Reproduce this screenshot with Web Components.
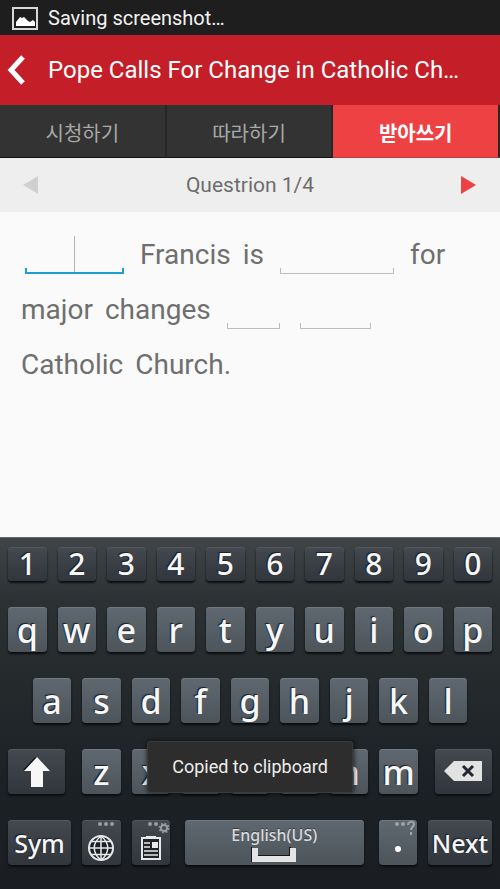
<!DOCTYPE html>
<html lang="en">
<head>
<meta charset="utf-8">
<meta name="viewport" content="width=device-width, initial-scale=1">
<title>Dictation</title>
<style>
  html, body { height: 100%; }
  body { margin: 0; font-family: Roboto, "Noto Sans CJK KR", sans-serif; background: #fafafa; }
</style>
</head>
<body>
<dictation-app></dictation-app>

<script>
const define = (name, html, setup) => {
  const template = document.createElement('template');
  template.innerHTML = html;
  customElements.define(name, class extends HTMLElement {
    constructor() {
      super();
      this.attachShadow({ mode: 'open' }).append(template.content.cloneNode(true));
    }
    connectedCallback() { if (setup) setup(this, this.shadowRoot); }
  });
};

define('status-bar', `
<style>
  :host { display: flex; align-items: center; gap: 10px; height: 35px; padding: 0 12px; background: #1e1e1e; color: #f2f2f2; font-size: 20px; }
  svg { display: block; flex: none; }
</style>
<svg width="26" height="24" viewBox="0 0 26 24" aria-hidden="true">
  <rect x="1" y="2" width="24" height="21" fill="none" stroke="#d8d8d8" stroke-width="2"/>
  <path d="M4 20v-4l4-5 2 1 2-1 4 4 2 1 3-2 2 2v4z" fill="#fff"/>
</svg>
<slot></slot>`);

define('title-bar', `
<style>
  :host { display: flex; align-items: center; gap: 16px; height: 70px; padding: 0 40px 0 6px; background: #c41e28; color: #fff; box-sizing: border-box; }
  button { flex: none; width: 26px; height: 40px; padding: 0; border: 0; background: none; }
  svg { display: block; }
  h1 { margin: 0; font-size: 24px; font-weight: 400; white-space: nowrap; line-height: 32px; }
</style>
<button aria-label="Back"><svg width="22" height="40" viewBox="0 0 22 40"><path d="M17 7L5 20l12 13" fill="none" stroke="#fff" stroke-width="5"/></svg></button>
<h1><slot></slot></h1>`);

define('tab-item', `
<style>
  :host { display: flex; flex: 1 1 0; }
  button { flex: 1; padding: 2px 0 0; border: 0; border-right: 2px solid #262626; border-bottom: 1px solid #111; background: #333; color: #a8a8a8; font: 400 20px "Noto Sans CJK KR", sans-serif; }
  :host([selected]) button { background: #ee4143; border-bottom-color: #c93a3c; color: #fff; font-weight: 700; }
</style>
<button role="tab"><slot></slot></button>`, (host, root) => {
  root.querySelector('button').setAttribute('aria-selected', host.hasAttribute('selected'));
});

define('tab-strip', `
<style>:host { display: flex; height: 53px; background: #222; }</style>
<slot></slot>`);

define('question-nav', `
<style>
  :host { display: flex; align-items: center; justify-content: space-between; height: 54px; padding: 0 20px; background: #eee; color: #6d6d6d; font-size: 21px; }
  button { display: block; padding: 0; width: 22px; height: 30px; border: 0; background: none; color: #ee4143; }
  button:disabled { color: #d0d0d0; }
  svg { display: block; margin: auto; }
</style>
<button aria-label="Previous question" disabled><svg width="16" height="18" viewBox="0 0 16 18"><path d="M15 0v18L0 9z" fill="currentColor"/></svg></button>
<span><slot></slot></span>
<button aria-label="Next question"><svg width="16" height="18" viewBox="0 0 16 18"><path d="M0 0v18l15-9z" fill="currentColor"/></svg></button>`);

define('blank-field', `
<style>
  :host { display: block; margin: 0 4px; --line: #bdbdbd; --thick: 1px; --caret: transparent; }
  :host([active]) { --line: #1b9fd4; --thick: 2px; --caret: #b4b4b4; }
  input { display: block; box-sizing: border-box; width: 100%; height: 38px; border: 0; padding: 0 4px; outline: 0; font: inherit; color: inherit; text-align: center;
    background:
      linear-gradient(var(--caret), var(--caret)) center top / 1px 36px no-repeat,
      linear-gradient(var(--line), var(--line)) left bottom / 100% var(--thick) no-repeat,
      linear-gradient(var(--line), var(--line)) left bottom / var(--thick) 6px no-repeat,
      linear-gradient(var(--line), var(--line)) right bottom / var(--thick) 6px no-repeat; }
</style>
<input type="text">`, (host, root) => {
  host.style.width = host.getAttribute('size') + 'px';
  root.querySelector('input').setAttribute('aria-label', host.getAttribute('label'));
});

define('cloze-text', `
<style>
  :host { display: flex; flex-wrap: wrap; align-content: flex-start; align-items: center; column-gap: 12px; padding: 15px 20px 14px 21px; flex: 1; background: #fafafa; color: #6f6f6f; font-size: 28px; line-height: 55px; }
</style>
<slot></slot>`);

define('key-cap', `
<style>
  :host { display: block; flex: none; width: calc((100% - 99px) / 10); height: 45px; }
  button { display: flex; flex-direction: column; align-items: center; justify-content: center; box-sizing: border-box; width: 100%; height: 100%; padding: 0; border: 0; border-radius: 4px;
    background: linear-gradient(#5f6770, #4d555b); box-shadow: 0 2px 2px #0b0d0f, inset 0 1px #707880;
    color: #f7f7f7; font: 500 34px/40px "Noto Sans", sans-serif; text-shadow: -1px -1px 1px #1a1e22; }
  :host([dark]) button { background: linear-gradient(#444950, #31353c); box-shadow: 0 2px 2px #0b0d0f, inset 0 1px #53585d; }
  :host([number]) { height: 34px; }
  :host([number]) button { font-size: 30px; line-height: 34px; }
  :host([word]) button { font-size: 25px; }
</style>
<button><slot></slot></button>`, (host, root) => {
  const label = host.getAttribute('label');
  if (label) root.querySelector('button').setAttribute('aria-label', label);
});

define('key-board', `
<style>
  :host { position: relative; display: flex; flex-direction: column; gap: 26px; padding: 9px 8px 24px; border-top: 1px solid #666a6c; background: linear-gradient(#414547, #2c3134 18%, #282d30 30%, #1c2125 70%, #1a1e22); }
  .row { display: flex; justify-content: center; gap: 11px; }
  .wide { justify-content: space-between; gap: 0; }
  .group { display: flex; gap: 11px; flex: none; width: calc(70% - 3px); }
  .group key-cap { flex: 1; }
  .side { width: 57px; }
  .sym { width: 63px; }
  .next { width: 64px; }
  .space { flex: 1; margin: 0 4px; }
  svg { display: block; }
  .lang { padding-top: 3px; font-size: 16px; line-height: 20px; color: #d8dadc; text-shadow: 0 -1px #3a4046; }
  ::slotted(*) { position: absolute; left: 50%; bottom: 96px; transform: translateX(-50%); }
</style>
<div class="row" id="numbers"></div>
<div class="row" id="top"></div>
<div class="row" id="home"></div>
<div class="row wide">
  <key-cap class="side" dark label="Shift"><svg width="28" height="30" viewBox="0 0 28 30"><path d="M13 -1L0 13h8v16h12V14z" fill="#0e1114"/><path d="M14 0L1 14h7v16h12V14h7z" fill="#f7f7f7"/></svg></key-cap>
  <div class="group" id="bottom"></div>
  <key-cap class="side" dark label="Backspace"><svg width="38" height="21" viewBox="0 0 38 21"><path d="M0 10L10 0h28v20H10z" fill="#e2e2e2"/><path d="M19 5l10 10M29 5L19 15" stroke="#24282c" stroke-width="3"/></svg></key-cap>
</div>
<div class="row">
  <key-cap class="sym" dark word>Sym</key-cap>
  <key-cap dark label="Language"><svg width="38" height="45" viewBox="0 0 38 45" fill="none">
    <g fill="#999c9f"><circle cx="18" cy="4" r="2"/><circle cx="24" cy="4" r="2"/><circle cx="30" cy="4" r="2"/></g>
    <circle cx="19" cy="28" r="12" fill="#1b2026" stroke="#e8e8e8" stroke-width="2"/>
    <path d="M19 16v24M7 28h24M9 21.500h20M9 34.500h20M19 16c-9 7-9 17 0 24M19 16c9 7 9 17 0 24" stroke="#e8e8e8" stroke-width="1.500"/></svg></key-cap>
  <key-cap dark label="Clipboard"><svg width="38" height="45" viewBox="0 0 38 45" fill="none">
    <g fill="#999c9f"><circle cx="18" cy="4" r="2"/><circle cx="24" cy="4" r="2"/></g>
    <circle cx="32" cy="8" r="3" stroke="#999c9f" stroke-width="2"/>
    <circle cx="32" cy="8" r="4.500" stroke="#999c9f" stroke-width="1.800" stroke-dasharray="1.700 1.834"/>
    <rect x="10" y="18" width="18" height="21" fill="#202429" stroke="#e8e8e8" stroke-width="2"/>
    <path d="M14 16h10v3H14z" fill="#e8e8e8"/>
    <path d="M12 23h6M12 27h6M12 31h14M12 35h14" stroke="#e8e8e8" stroke-width="1.500"/><path d="M20 22h6v6h-6z" fill="#e8e8e8"/></svg></key-cap>
  <key-cap class="space"><span class="lang">English(US)</span><svg width="46" height="18" viewBox="0 0 46 18"><path d="M0 2v15M7 11h32V2" fill="none" stroke="#14181b" stroke-width="2"/><path d="M1 3h6v8h32V3h6v14H1z" fill="#e4e4e4"/></svg></key-cap>
  <key-cap label="Period"><svg width="38" height="45" viewBox="0 0 38 45"><g fill="#a0a5a9"><circle cx="18" cy="4" r="2"/><circle cx="24" cy="4" r="2"/></g><path d="M29 5c0-4 6-4 6-1 0 3-3 3-3 6M32 12v3" fill="none" stroke="#a0a5a9" stroke-width="2"/><circle cx="19" cy="29" r="3" fill="#fff"/></svg></key-cap>
  <key-cap class="next" dark word>Next</key-cap>
</div>
<slot></slot>`, (host, root) => {
  const fill = (id, letters, attrs = []) => {
    for (const letter of letters) {
      const key = document.createElement('key-cap');
      key.textContent = letter;
      attrs.forEach(a => key.setAttribute(a, ''));
      root.getElementById(id).append(key);
    }
  };
  fill('numbers', '1234567890', ['dark', 'number']);
  fill('top', 'qwertyuiop');
  fill('home', 'asdfghjkl');
  fill('bottom', 'zxcvbnm');
});

define('toast-message', `
<style>
  :host { display: block; box-sizing: border-box; padding: 12px 24px; border: 1px solid #3c3c3c; border-radius: 3px; background: #2d2d2d; box-shadow: 0 0 5px #000a; color: #eee; font-size: 18px; line-height: 26px; white-space: nowrap; }
</style>
<slot></slot>`);

define('dictation-app', `
<style>
  :host { display: flex; flex-direction: column; min-height: 100vh; }
</style>
<status-bar>Saving screenshot…</status-bar>
<title-bar>Pope Calls For Change in Catholic Ch…</title-bar>
<tab-strip role="tablist"><tab-item>시청하기</tab-item><tab-item>따라하기</tab-item><tab-item selected>받아쓰기</tab-item></tab-strip>
<question-nav>Questrion 1/4</question-nav>
<cloze-text>
  <blank-field active size="99" label="Word 1"></blank-field>
  <span>Francis</span><span>is</span>
  <blank-field size="114" label="Word 4"></blank-field>
  <span>for</span><span>major</span><span>changes</span>
  <blank-field size="53" label="Word 8"></blank-field>
  <blank-field size="71" label="Word 9"></blank-field>
  <span>Catholic</span><span>Church.</span>
</cloze-text>
<key-board><toast-message role="status">Copied to clipboard</toast-message></key-board>`);
</script>
</body>
</html>
